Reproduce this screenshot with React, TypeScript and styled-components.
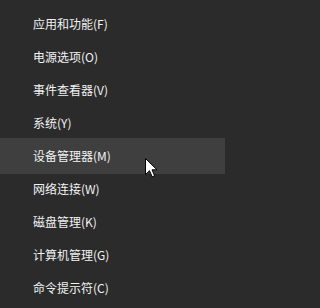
import React from 'react';
import styled, { createGlobalStyle } from 'styled-components';

const GlobalStyle = createGlobalStyle`
  html, body {
    margin: 0;
    padding: 0;
    background: #2b2b2b;
  }
`;

const Menu = styled.div`
  position: relative;
  width: 225px;
  height: 308px;
  box-sizing: border-box;
  padding-top: 7px;
  background: #2b2b2b;
  display: flex;
  flex-direction: column;
  overflow: hidden;
`;

const Item = styled.div<{ $active?: boolean }>`
  display: flex;
  align-items: center;
  flex: none;
  height: ${p => (p.$active ? 36 : 33)}px;
  margin: ${p => (p.$active ? '-1.5px 0' : '0')};
  padding-left: 33px;
  background: ${p => (p.$active ? '#3f3f3f' : 'transparent')};
  color: #f2f2f2;
  font-family: "Noto Sans CJK SC", "Noto Sans", sans-serif;
  font-size: 12px;
  line-height: 1;
  white-space: nowrap;
`;

const Cursor = styled.svg`
  position: absolute;
  left: 145px;
  top: 158px;
  width: 13px;
  height: 20px;
`;

const items = [
  '应用和功能(F)',
  '电源选项(O)',
  '事件查看器(V)',
  '系统(Y)',
  '设备管理器(M)',
  '网络连接(W)',
  '磁盘管理(K)',
  '计算机管理(G)',
  '命令提示符(C)',
];

export default function App() {
  return (
    <>
      <GlobalStyle />
      <Menu>
        {items.map(label => (
          <Item key={label} $active={label === '设备管理器(M)'}>
            {label}
          </Item>
        ))}
        <Cursor viewBox="0 0 13 20">
          <path
            d="M0.5 0.5 L0.5 16.5 L4.5 12.7 L7.2 18.8 L9.6 17.8 L7 11.8 L12 11.8 Z"
            fill="#fff"
            stroke="#000"
            strokeWidth="1"
            strokeLinejoin="miter"
          />
        </Cursor>
      </Menu>
    </>
  );
}
